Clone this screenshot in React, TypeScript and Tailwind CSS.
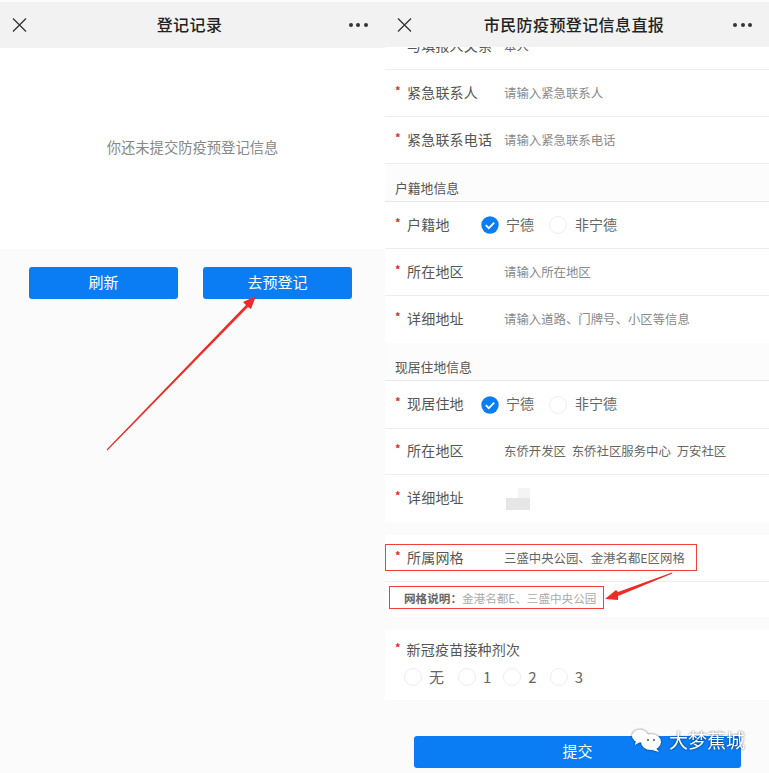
const font = { fontFamily: '"Noto Sans CJK SC", "Liberation Sans", sans-serif' };

function CloseIcon() {
  return (
    <svg width="19" height="16" viewBox="0 0 19 16" fill="none" stroke="#333" strokeWidth="1.3">
      <path d="M2 1.5l13 13M15 1.5L2 14.5" />
    </svg>
  );
}

function Dots() {
  return (
    <div className="flex gap-[3.5px]">
      <span className="h-[4px] w-[4px] rounded-full bg-[#333]" />
      <span className="h-[4px] w-[4px] rounded-full bg-[#333]" />
      <span className="h-[4px] w-[4px] rounded-full bg-[#333]" />
    </div>
  );
}

function Header({ title, h }: { title: string; h: string }) {
  return (
    <div className={`relative z-10 flex ${h} items-center justify-between bg-[#f2f2f2] pl-[11px] pr-[17px]`}>
      <CloseIcon />
      <span className="mb-[2px] text-[16px] font-medium tracking-[0.4px] text-[#222]">{title}</span>
      <Dots />
    </div>
  );
}

function Radio({ checked }: { checked?: boolean }) {
  if (checked) {
    return (
      <svg width="18" height="18" viewBox="0 0 18 18" className="shrink-0">
        <circle cx="9" cy="9" r="8.7" fill="#0a7df5" />
        <path d="M4.8 9.2l3 3 5.4-5.6" fill="none" stroke="#fff" strokeWidth="1.8" />
      </svg>
    );
  }
  return <span className="h-[18px] w-[18px] shrink-0 rounded-full border border-[#eee] bg-white" />;
}

function Row({ label, children, h = "h-[47px]" }: { label: string; children: React.ReactNode; h?: string }) {
  return (
    <div className={`flex ${h} items-center border-b border-[#ededed] bg-white`}>
      <span className="mb-[6px] w-[10px] pl-[10px] text-[11px] font-bold leading-none text-[#d0312d]">*</span>
      <span className="mb-[2px] ml-[12px] w-[97px] shrink-0 text-[14px] tracking-[0.2px] text-[#555]">{label}</span>
      {children}
    </div>
  );
}

function Value({ text, light }: { text: string; light?: boolean }) {
  return <span className={`text-[12.4px] [word-spacing:3px] ${light ? "text-[#8a8a8a]" : "text-[#666]"}`}>{text}</span>;
}

function PlaceOptions() {
  return (
    <div className="-ml-[23px] flex items-center text-[14px] text-[#666]">
      <Radio checked />
      <span className="mb-[2px] ml-[7px]">宁德</span>
      <span className="ml-[15px] flex"><Radio /></span>
      <span className="mb-[2px] ml-[8px]">非宁德</span>
    </div>
  );
}

function SectionTitle({ text }: { text: string }) {
  return (
    <div className="flex h-[38px] items-end border-b border-[#e8e8e8] bg-[#fcfcfc] pb-[4px] pl-[10px] text-[12.8px] text-[#555]">
      {text}
    </div>
  );
}

function DoseOption({ label, gap }: { label: string; gap: string }) {
  return (
    <div className={`flex items-center ${gap}`}>
      <Radio />
      <span className="ml-[7px] text-[15px] text-[#666]">{label}</span>
    </div>
  );
}

function LeftPanel() {
  return (
    <div className="flex w-[385px] shrink-0 flex-col bg-[#fbfbfb] pt-[2px]">
      <Header title="登记记录" h="h-[46px]" />
      <div className="flex h-[201px] items-start justify-center bg-white pt-[88px] text-[14.3px] leading-[22px] text-[#888]">
        你还未提交防疫预登记信息
      </div>
      <div className="flex gap-[25px] pl-[29px] pt-[18px]">
        <button className="h-[32px] w-[149px] rounded-[3px] bg-[#0a7df5] pb-[2px] text-[15px] text-white">刷新</button>
        <button className="h-[32px] w-[149px] rounded-[3px] bg-[#0a7df5] pb-[2px] text-[15px] text-white">去预登记</button>
      </div>
    </div>
  );
}

function RightPanel() {
  return (
    <div className="flex h-[773px] flex-1 flex-col overflow-hidden bg-[#fbfbfb] pt-[2px]">
      <Header title="市民防疫预登记信息直报" h="h-[45px]" />
      <div className="-mt-[24px]">
        <Row label="与填报人关系">
          <Value text="本人" />
        </Row>
        <Row label="紧急联系人">
          <Value text="请输入紧急联系人" light />
        </Row>
        <Row label="紧急联系电话">
          <Value text="请输入紧急联系电话" light />
        </Row>
        <SectionTitle text="户籍地信息" />
        <Row label="户籍地">
          <PlaceOptions />
        </Row>
        <Row label="所在地区">
          <Value text="请输入所在地区" light />
        </Row>
        <div className="h-[47px] bg-white [&>div]:border-b-0">
          <Row label="详细地址">
            <Value text="请输入道路、门牌号、小区等信息" light />
          </Row>
        </div>
        <SectionTitle text="现居住地信息" />
        <Row label="现居住地" h="h-[48px]">
          <PlaceOptions />
        </Row>
        <Row label="所在地区" h="h-[46px]">
          <Value text="东侨开发区 东侨社区服务中心 万安社区" />
        </Row>
        <div className="h-[47px] bg-white [&>div]:border-b-0">
          <Row label="详细地址">
            <div className="ml-[2px] flex flex-col items-end">
              <span className="h-[10px] w-[12px] bg-[#f4f4f4]" />
              <span className="h-[12px] w-[24px] bg-[#e6e6e6]" />
            </div>
          </Row>
        </div>
        <div className="h-[13px]" />
        <Row label="所属网格">
          <Value text="三盛中央公园、金港名都E区网格" />
        </Row>
        <div className="flex h-[35px] items-center bg-white pb-[1px] pl-[19px] text-[11.6px]">
          <span className="font-bold text-[#666]">网格说明：</span>
          <span className="text-[#aaa]">金港名都E、三盛中央公园</span>
        </div>
        <div className="h-[13px]" />
        <div className="h-[70px] bg-white">
          <div className="flex items-center pt-[9px]">
            <span className="mb-[4px] pl-[10px] text-[11px] font-bold leading-none text-[#d0312d]">*</span>
            <span className="ml-[6px] text-[14px] tracking-[0.2px] text-[#555]">新冠疫苗接种剂次</span>
          </div>
          <div className="mt-[6px] flex items-center pl-[19px]">
            <DoseOption label="无" gap="" />
            <DoseOption label="1" gap="ml-[14px]" />
            <DoseOption label="2" gap="ml-[12px]" />
            <DoseOption label="3" gap="ml-[13px]" />
          </div>
        </div>
        <div className="flex pl-[29px] pt-[36px]">
          <button className="h-[32px] w-[327px] rounded-[3px] bg-[#0a7df5] pb-[2px] text-[15px] text-white">提交</button>
        </div>
      </div>
    </div>
  );
}

export default function App() {
  return (
    <div className="relative flex h-[773px] w-[769px] overflow-hidden bg-white" style={font}>
      <LeftPanel />
      <RightPanel />

      {/* annotations drawn on top of the screenshot */}
      <div className="absolute left-[385px] top-[544px] h-[27px] w-[312px] border border-[#f0403a]" />
      <div className="absolute left-[389px] top-[586px] h-[23px] w-[215px] border border-[#f0403a]" />
      <svg className="pointer-events-none absolute left-0 top-0" width="769" height="773">
        <polygon points="106.6,449.6 246,305 243,302 256,296 251,309 248,307 107.4,450.4" fill="#f02a24" />
        <polygon points="672,572.6 618,592 616,590 605,599 618,600 618,596 672.3,573.4" fill="#f02a24" />
      </svg>

      {/* watermark */}
      <div className="absolute left-[631px] top-[727px] flex items-center [filter:drop-shadow(0_0_1px_rgba(0,0,0,0.6))]">
        <svg width="32" height="26" viewBox="0 0 32 26" fill="#fff">
          <ellipse cx="9" cy="9" rx="8" ry="6.5" />
          <path d="M5 13l-1 5 5-3z" />
          <ellipse cx="20" cy="15" rx="10" ry="8" />
          <path d="M25 21l3 4-7-2z" />
          <circle cx="17" cy="13" r="1" fill="#555" />
          <circle cx="23" cy="13" r="1" fill="#555" />
        </svg>
        <span className="ml-[6px] text-[19px] leading-[24px] text-white">大梦蕉城</span>
      </div>
    </div>
  );
}
